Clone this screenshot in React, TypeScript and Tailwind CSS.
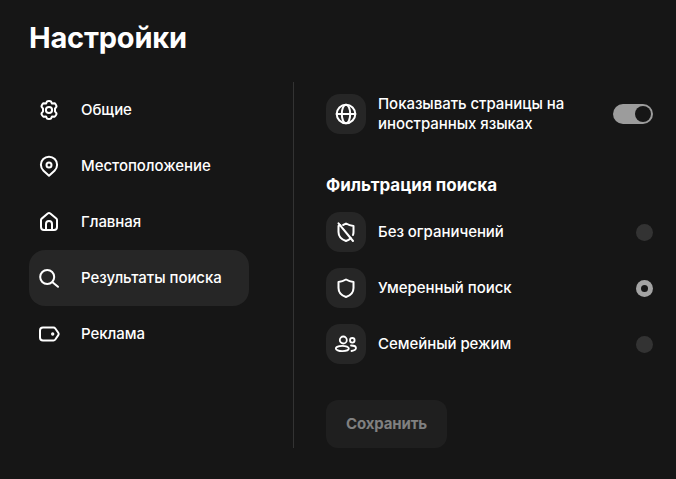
const F = "[font-family:Inter,'Noto_Sans',sans-serif]";

const sw = { fill: "none", stroke: "currentColor", strokeWidth: 2, strokeLinecap: "round" as const, strokeLinejoin: "round" as const };

const Gear = () => (
  <svg width="24" height="24" viewBox="0 0 24 24" {...sw}>
    <path d="M10 3.500c.6-.6 3.400-.6 4 0l1 2.100 2.500-.4c.8.200 2.200 2.600 2 3.400L18 10.600v2.800l1.500 2c.2.800-1.200 3.200-2 3.400l-2.500-.4-1 2.100c-.6.600-3.400.6-4 0l-1-2.100-2.500.4c-.8-.2-2.200-2.600-2-3.400l1.500-2v-2.800l-1.500-2c-.2-.8 1.200-3.200 2-3.400l2.500.4z" />
    <circle cx="12" cy="12" r="3.100" />
  </svg>
);
const Pin = () => (
  <svg width="24" height="24" viewBox="0 0 24 24" {...sw}>
    <path d="M12 21.700l-5.500-5A8.100 8.100 0 0 1 3.900 10.800a8.100 8.100 0 0 1 16.200 0 8.100 8.100 0 0 1-2.600 5.900z" />
    <circle cx="12" cy="11" r="2.500" />
  </svg>
);
const Home = () => (
  <svg width="24" height="24" viewBox="0 0 24 24" {...sw}>
    <path d="M4 10c0-.6.200-1 .7-1.400l6-5a2 2 0 0 1 2.600 0l6 5c.5.400.7.800.7 1.400v7a3 3 0 0 1-3 3H7a3 3 0 0 1-3-3z" />
    <path d="M9 20v-6a3 3 0 0 1 6 0v6" />
  </svg>
);
const Search = () => (
  <svg width="24" height="24" viewBox="0 0 24 24" {...sw}>
    <circle cx="10.200" cy="11" r="7" />
    <path d="M15.500 16.200L21 20.800" />
  </svg>
);
const Tag = () => (
  <svg width="24" height="24" viewBox="0 0 24 24" {...sw}>
    <path d="M6 5.500h10.500c.8 0 1.300.3 1.800 1l3 4.300c.5.700.5 1.700 0 2.400l-3 4.300c-.5.700-1 1-1.800 1H6a3 3 0 0 1-3-3V8.500a3 3 0 0 1 3-3z" />
    <circle cx="15.700" cy="12" r="0.700" fill="currentColor" />
  </svg>
);
const Globe = () => (
  <svg width="24" height="24" viewBox="0 0 24 24" {...sw}>
    <circle cx="12" cy="12" r="9.300" />
    <path d="M2.700 12h18.600" />
    <ellipse cx="12" cy="12" rx="4.200" ry="9.300" />
  </svg>
);
const ShieldPath = "M12 3.500c2.500 1.600 4.800 2.300 7.500 2.500v6c0 4.500-3 7.500-7.500 9-4.500-1.500-7.500-4.500-7.500-9V6c2.700-.2 5-.9 7.500-2.500z";
const Shield = () => (
  <svg width="24" height="24" viewBox="0 0 24 24" {...sw}>
    <path d={ShieldPath} />
  </svg>
);
const ShieldOff = () => (
  <svg width="24" height="24" viewBox="0 0 24 24" {...sw}>
    <path d="M6.500 5.300L4.500 6v6c0 4.500 3 7.500 7.500 9 1.900-.6 3.500-1.600 4.800-2.800M19 15c.3-.9.500-1.900.500-3V6c-2.700-.2-5-.9-7.500-2.500-1 .6-1.900 1.100-2.900 1.500" />
    <path d="M4.500 3.300L19 21" />
  </svg>
);
const Family = () => (
  <svg width="24" height="24" viewBox="0 0 24 24" {...sw} strokeWidth={1.800}>
    <circle cx="9.300" cy="8" r="3.500" />
    <circle cx="18.300" cy="8.300" r="2.300" />
    <ellipse cx="8.300" cy="16.500" rx="6.500" ry="2.700" />
    <path d="M17 13.500c2.600 0 5 .8 5 2.500 0 1.500-1.800 2.500-4.500 3" />
  </svg>
);

const nav = [
  { label: "Общие", icon: <Gear /> },
  { label: "Местоположение", icon: <Pin /> },
  { label: "Главная", icon: <Home /> },
  { label: "Результаты поиска", icon: <Search />, active: true },
  { label: "Реклама", icon: <Tag /> },
];

const IconBox = ({ children }: { children: React.ReactNode }) => (
  <div className="w-10 h-10 shrink-0 rounded-[14px] bg-[#262626] flex items-center justify-center text-white">{children}</div>
);

const options = [
  { label: "Без ограничений", icon: <ShieldOff /> },
  { label: "Умеренный поиск", icon: <Shield />, on: true },
  { label: "Семейный режим", icon: <Family /> },
];

export default function App() {
  return (
    <div className={`w-[676px] h-[479px] overflow-hidden bg-[#161616] text-white pt-[18px] ${F}`}>
      <h1 className="pl-[29px] text-[29px] leading-[40px] font-bold tracking-[-0.2px] text-white">Настройки</h1>
      <div className="flex mt-[24px] pl-[29px]">
        <nav className="w-[220px] shrink-0 flex flex-col">
          {nav.map((n) => (
            <div
              key={n.label}
              className={`h-14 flex items-center gap-5 pl-[8px] rounded-2xl ${n.active ? "bg-[#262626]" : ""}`}
            >
              {n.icon}
              <span className="text-[15px] leading-5 font-medium tracking-[-0.05px]">{n.label}</span>
            </div>
          ))}
        </nav>
        <div className="ml-[44px] w-px h-[366px] bg-[#333333]" />
        <div className="ml-[32px] w-[327px] flex flex-col">
          <div className="flex items-center h-10 mt-3">
            <IconBox><Globe /></IconBox>
            <p className="ml-3 flex-1 text-[15px] leading-[20px] font-medium tracking-[-0.05px]">
              Показывать страницы на<br />иностранных языках
            </p>
            <div className="w-10 h-5 rounded-full bg-[#9c9c9c] flex items-center justify-end pr-[2px]">
              <div className="w-4 h-4 rounded-full bg-[#161616]" />
            </div>
          </div>
          <h2 className="mt-[40px] text-[17px] leading-[22px] font-bold">Фильтрация поиска</h2>
          <div className="mt-2 flex flex-col">
            {options.map((o) => (
              <div key={o.label} className="h-14 flex items-center">
                <IconBox>{o.icon}</IconBox>
                <span className="ml-3 flex-1 text-[15px] leading-5 font-medium tracking-[-0.05px]">{o.label}</span>
                {o.on ? (
                  <div className="w-[17px] h-[17px] rounded-full bg-[#a3a3a3] flex items-center justify-center">
                    <div className="w-[7px] h-[7px] rounded-full bg-[#161616]" />
                  </div>
                ) : (
                  <div className="w-[17px] h-[17px] rounded-full bg-[#333333]" />
                )}
              </div>
            ))}
          </div>
          <button className="mt-7 w-[121px] h-12 rounded-xl bg-[#1f1f1f] text-[#808080] text-[15px] font-bold tracking-[-0.15px]">
            Сохранить
          </button>
        </div>
      </div>
    </div>
  );
}
